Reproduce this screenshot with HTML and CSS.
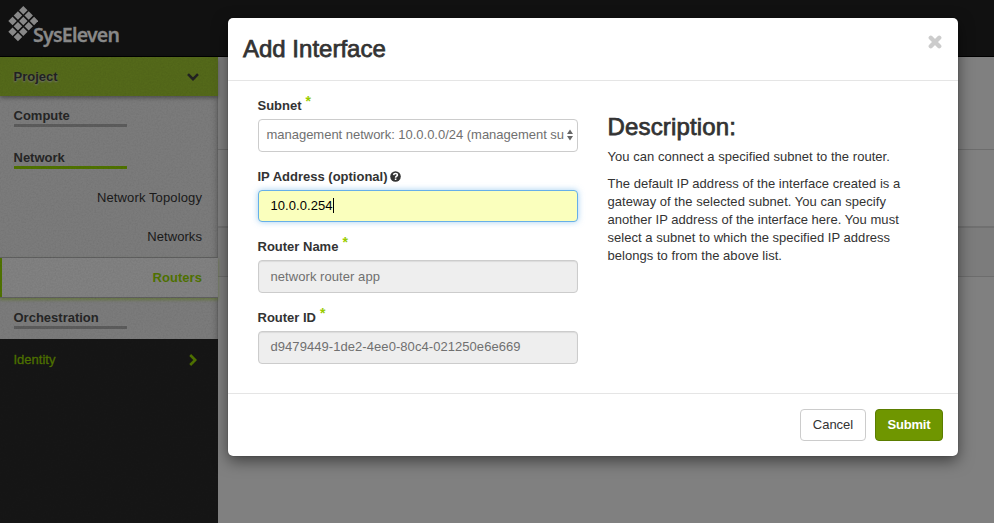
FILE: index.html
```html
<!DOCTYPE html>
<html lang="en">
<head>
<meta charset="utf-8">
<title>Add Interface</title>
<link rel="stylesheet" href="styles.css">
</head>
<body>
<header class="topbar">
  <svg class="logo-mark" width="30" height="36" viewBox="0 0 30 36" fill="#888">
    <g transform="translate(15.3 0) rotate(45)">
      <rect x="0" y="0" width="6" height="6"/><rect x="7.6" y="0" width="6" height="6"/><rect x="15.2" y="0" width="6" height="6"/>
      <rect x="0" y="7.6" width="6" height="6"/><rect x="7.6" y="7.6" width="6" height="6"/><rect x="15.2" y="7.6" width="6" height="6"/>
      <rect x="0" y="15.2" width="6" height="6"/><rect x="7.6" y="15.2" width="6" height="6"/><rect x="15.2" y="15.2" width="6" height="6"/>
      <rect x="7.6" y="22.8" width="6" height="6"/><rect x="15.2" y="22.8" width="6" height="6"/>
    </g>
  </svg>
  <span class="logo-name">SysEleven</span>
</header>
<div class="layout">
  <nav class="sidebar">
    <div class="project"><span>Project</span>
      <svg width="12" height="8" viewBox="0 0 12 8" fill="none" stroke="#222" stroke-width="2.6"><path d="M1 1.2 6 6.2 11 1.2"/></svg>
    </div>
    <div class="menu">
      <div class="group"><span>Compute</span></div>
      <div class="group open"><span>Network</span></div>
      <a class="item topology"><span>Network Topology</span></a>
      <a class="item"><span>Networks</span></a>
      <a class="item active"><span>Routers</span></a>
      <div class="group last"><span>Orchestration</span></div>
    </div>
    <div class="identity"><span>Identity</span>
      <svg width="8" height="12" viewBox="0 0 8 12" fill="none" stroke="#4f7200" stroke-width="2.6"><path d="M1.2 1 6.2 6 1.2 11"/></svg>
    </div>
    <svg class="grain" width="218" height="466"><filter id="grain"><feTurbulence type="fractalNoise" baseFrequency="0.6" numOctaves="2"/><feColorMatrix values="0 0 0 0 0  0 0 0 0 0  0 0 0 0 0  0.7 0.7 0 0 -0.55"/></filter><rect width="218" height="466" filter="url(#grain)"/></svg>
  </nav>
  <main class="content"><div class="row r1"></div><div class="row r2"></div><div class="row r3"></div></main>
</div>
<section class="modal">
  <header class="modal-head"><h3><span>Add Interface</span></h3>
    <svg class="close" width="14" height="14" viewBox="0 0 14 14" stroke="#ccc" stroke-width="4.4" stroke-linecap="round"><path d="M2.8 2.8 11.2 11.2M11.2 2.8 2.8 11.2"/></svg>
  </header>
  <div class="modal-body">
    <form class="fields">
      <div class="field"><label><span>Subnet</span><b class="star">*</b></label>
        <div class="control select"><span class="value">management network: 10.0.0.0/24 (management su</span>
          <svg width="6" height="12" viewBox="0 0 6 12" fill="#666"><path d="M0 5 3 0.5 6 5zM0 7h6L3 11.5z"/></svg></div></div>
      <div class="field"><label><span>IP Address (optional)</span>
          <svg class="help" width="11" height="11" viewBox="0 0 11 11"><circle cx="5.5" cy="5.5" r="5.3" fill="#333"/><path d="M3.6 4.1C3.8 2 7.5 2.1 7.4 4.1 7.3 5.3 5.6 5.2 5.6 6.7M5.6 7.6V9.1" fill="none" stroke="#fff" stroke-width="1.6"/></svg></label>
        <div class="control focused"><span>10.0.0.254</span><i class="caret"></i></div></div>
      <div class="field"><label><span>Router Name</span><b class="star">*</b></label>
        <div class="control disabled"><span>network router app</span></div></div>
      <div class="field"><label><span>Router ID</span><b class="star">*</b></label>
        <div class="control disabled"><span>d9479449-1de2-4ee0-80c4-021250e6e669</span></div></div>
    </form>
    <div class="description">
      <h3><span>Description:</span></h3>
      <p>You can connect a specified subnet to the router.</p>
      <p>The default IP address of the interface created is a<br>gateway of the selected subnet. You can specify<br>another IP address of the interface here. You must<br>select a subnet to which the specified IP address<br>belongs to from the above list.</p>
    </div>
  </div>
  <footer class="modal-foot"><a class="btn cancel"><span>Cancel</span></a><a class="btn submit"><span>Submit</span></a></footer>
</section>
</body>
</html>
```
FILE: styles.css
```css
* { box-sizing: border-box; }
body { margin: 0; width: 994px; height: 523px; overflow: hidden; position: relative; background: #808080; font: 13px/18px "Liberation Sans", Arial, sans-serif; color: #333; }
svg { display: block; flex: none; }
.topbar { height: 57px; background: #111; border-bottom: 1px solid #000; display: flex; align-items: flex-start; padding: 6px 0 0 8px; }
.logo-name { font: 600 19.5px/24px "Noto Sans", sans-serif; color: #888; margin: 17px 0 0 -5px; letter-spacing: -0.75px; -webkit-text-stroke: .3px #888; }
.layout { display: flex; height: 466px; }
.sidebar { width: 218px; flex: none; background: #161616; position: relative; }
.grain { position: absolute; left: 0; top: 0; opacity: .1; pointer-events: none; }
.project { height: 39px; background: #54691a; display: flex; align-items: center; justify-content: space-between; padding: 0 19px 0 13.5px; font-weight: bold; color: #222; text-shadow: 0 1px 2px #777; position: relative; box-shadow: 0 2px 4px rgba(0,0,0,.35); }
.menu { height: 243px; background: #7b7b7b; border-right: 1px solid #656565; padding-top: 10px; box-shadow: inset -5px 0 5px -4px rgba(0,0,0,.15); }
.group { height: 42px; padding: 1px 0 0 13.5px; font-weight: bold; color: #262626; }
.group::after { content: ""; display: block; width: 113px; height: 3px; margin-top: -1px; background: #5c5c5c; }
.group.open::after { background: #4f7200; }
.item { display: flex; height: 38px; align-items: center; justify-content: flex-end; padding-right: 15px; color: #1a1a1a; letter-spacing: .06px; }
.topology { margin-top: -12px; height: 40px; letter-spacing: .12px; }
.item.active { height: 41px; margin: 1px -1px 0 0; padding-right: 16px; background: #818181; border: solid #5f5f5f; border-width: 1px 0; color: #4f7200; font-weight: bold; box-shadow: inset 2px 0 #4f7200, 0 2px 3px rgba(79,114,0,.45); }
.group.last { padding-top: 11px; }
.identity { display: flex; align-items: center; justify-content: space-between; height: 42px; padding: 0 21px 0 13.5px; color: #4f7200; }
.identity span { -webkit-text-stroke: .3px #4f7200; }
.content { flex: 1; }
.row { border-bottom: 1px solid #6d6d6d; }
.r1 { height: 93px; }
.r2 { height: 78px; border-bottom-width: 2px; border-color: #707070; }
.r3 { height: 49px; background: #7c7c7c; }
.modal { position: absolute; left: 228px; top: 18px; width: 730px; height: 438px; background: #fff; border-radius: 5px; box-shadow: 0 0 1px rgba(0,0,0,.6), 0 5px 15px rgba(0,0,0,.5); display: flex; flex-direction: column; }
.modal-head { height: 63px; border-bottom: 1px solid #e5e5e5; display: flex; justify-content: space-between; padding: 17px 16px 0 15px; }
h3 { margin: 0; font-size: 24px; line-height: 28px; font-weight: normal; -webkit-text-stroke: .75px #333; }
.modal-body { height: 312px; display: flex; padding: 15px 30px 0; }
.fields { width: 320px; }
.field { height: 70.5px; }
label { display: flex; height: 23px; padding-top: 1px; font-weight: bold; margin-left: -.5px; }
.star { color: #9c0; font-size: 14px; line-height: 12px; margin: -2px 0 0 4px; }
.help { margin: 3px 0 0 2.5px; }
.control { height: 33px; border: 1px solid #ccc; border-radius: 4px; display: flex; align-items: center; padding: 0 11.5px; color: #707070; white-space: nowrap; letter-spacing: .06px; }
.select { padding: 0 4px 2px 7.5px; justify-content: space-between; letter-spacing: -.02px; }
.value { width: 298px; }
.focused { height: 32px; background: #faffbd; border-color: #66afe9; color: #000; box-shadow: 0 0 6px rgba(102,175,233,.6); }
.caret { width: 1px; height: 15px; background: #000; }
.disabled { background: #eee; box-shadow: inset 0 1px 1px rgba(0,0,0,.08); }
.description { margin-left: 29.5px; padding-top: 17px; white-space: nowrap; letter-spacing: .035px; }
p { margin: 0 0 9px; }
.description h3 { margin-bottom: 7px; letter-spacing: .15px; }
.modal-foot { flex: 1; border-top: 1px solid #e5e5e5; display: flex; justify-content: flex-end; gap: 9px; padding: 15px 15px 0; }
.btn { height: 32px; width: 66px; border: 1px solid #ccc; border-radius: 4px; display: flex; align-items: center; justify-content: center; }
.submit { width: 68px; background: #6f9600; border-color: #5b7d00; color: #fff; font-weight: bold; letter-spacing: -.2px; }
```
